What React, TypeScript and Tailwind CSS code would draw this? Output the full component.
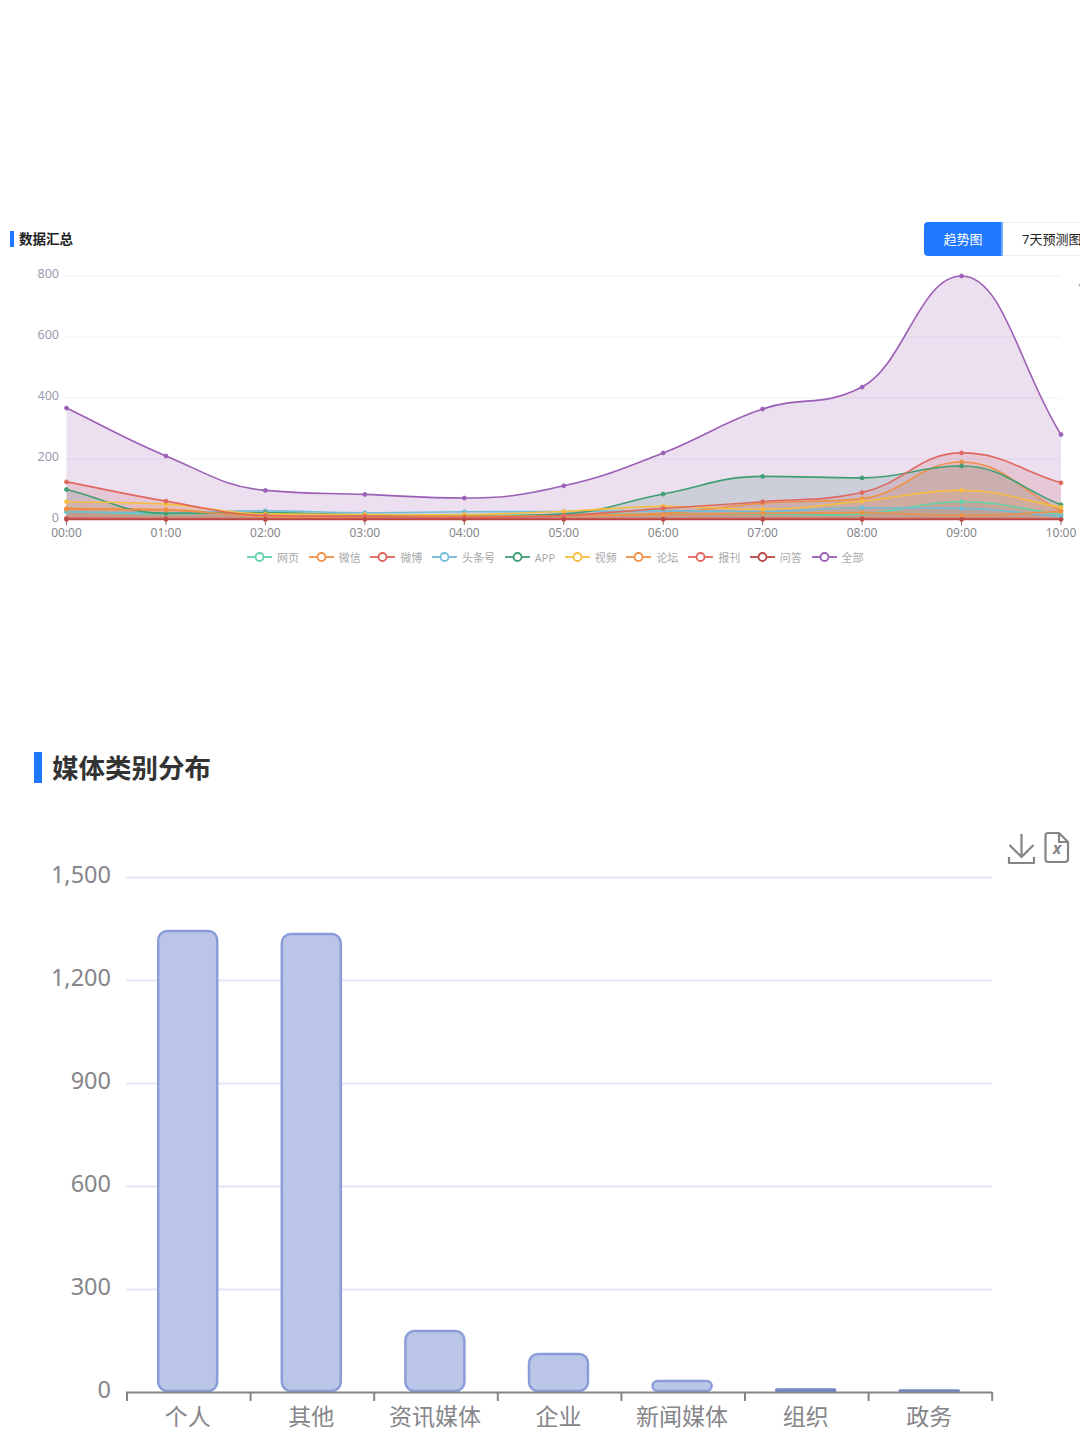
import React from "react";

const FONT = "'Noto Sans', 'Noto Sans CJK SC', sans-serif";

const hours = ["00:00", "01:00", "02:00", "03:00", "04:00", "05:00", "06:00", "07:00", "08:00", "09:00", "10:00"];

// trend chart data, same order as the legend so 全部 ends up on top
const series = [
  { name: "网页", color: "#63d2a8", data: [28, 20, 24, 14, 14, 18, 20, 20, 20, 60, 18] },
  { name: "微信", color: "#ee9048", data: [38, 34, 14, 10, 10, 15, 22, 55, 70, 190, 30] },
  { name: "微博", color: "#dd625a", data: [6, 5, 5, 5, 5, 5, 5, 5, 5, 5, 4] },
  { name: "头条号", color: "#72bcd8", data: [27, 24, 30, 24, 27, 28, 30, 28, 40, 38, 12] },
  { name: "APP", color: "#3f9e72", data: [100, 22, 24, 16, 12, 20, 85, 143, 138, 177, 50] },
  { name: "视频", color: "#f5bd42", data: [60, 52, 20, 18, 18, 28, 45, 35, 62, 97, 42] },
  { name: "论坛", color: "#ee9048", data: [35, 32, 12, 12, 12, 14, 18, 22, 24, 15, 28] },
  { name: "报刊", color: "#e0685e", data: [125, 62, 15, 12, 8, 15, 38, 60, 90, 220, 122] },
  { name: "问答", color: "#b84a46", data: [2, 2, 2, 2, 2, 2, 2, 2, 2, 2, 2] },
  { name: "全部", color: "#9b5fb6", data: [367, 210, 97, 84, 72, 112, 220, 364, 436, 800, 280] },
];

const bars = [
  { name: "个人", top: 931 },
  { name: "其他", top: 934 },
  { name: "资讯媒体", top: 1331 },
  { name: "企业", top: 1354 },
  { name: "新闻媒体", top: 1381 },
  { name: "组织", top: 1389.5 },
  { name: "政务", top: 1390.5 },
];

const px = (i: number) => 66.5 + i * 99.45;
const py = (v: number) => 520 - v * 0.305;

// smooth line through the points, flat at local peaks and clamped so it doesn't overshoot
const smoothPath = (data: number[]) => {
  const pts = data.map((v, i) => [px(i), py(v)]);
  const h = 99.45;
  const slope = pts.map((p, i) => {
    const prev = pts[i - 1] ?? p;
    const next = pts[i + 1] ?? p;
    const d1 = (p[1] - prev[1]) / h;
    const d2 = (next[1] - p[1]) / h;
    if (d1 * d2 < 0) return 0;
    const m = (next[1] - prev[1]) / (next[0] - prev[0]);
    const limit = 2.3 * Math.min(Math.abs(d1 || d2), Math.abs(d2 || d1));
    return Math.sign(m) * Math.min(Math.abs(m), limit);
  });
  let d = `M${pts[0][0]} ${pts[0][1]}`;
  for (let i = 1; i < pts.length; i++) {
    const c = h * 0.42;
    d += ` C${pts[i - 1][0] + c} ${pts[i - 1][1] + slope[i - 1] * c} ${pts[i][0] - c} ${pts[i][1] - slope[i] * c} ${pts[i][0]} ${pts[i][1]}`;
  }
  return d;
};

const SectionTitle = ({ big, text }: { big?: boolean; text: string }) => (
  <div className={big ? "flex items-center gap-[10px] pl-[34px] h-[31px]" : "flex items-center gap-[5px] pl-[10px] h-[34px]"}>
    <span className={big ? "block w-2 h-[31px] bg-[#1f78ff]" : "block w-1 h-4 bg-[#1f78ff]"} />
    <h2 className={big ? "pt-[3px] text-[26.5px] font-bold text-[#333]" : "pt-px text-[13.5px] font-bold text-[#222]"}>{text}</h2>
  </div>
);

const TrendChart = () => (
  <svg width={1080} height={290} viewBox="0 256 1080 290" className="block" fontFamily={FONT}>
    {[800, 600, 400, 200].map((v) => (
      <line key={v} x1={66} x2={1061} y1={py(v)} y2={py(v)} stroke="#f1f1f4" strokeWidth={1} />
    ))}
    {[0, 200, 400, 600, 800].map((v) => (
      <text key={v} x={59} y={py(v) + 1.5} textAnchor="end" fontSize={12.5} fill="#9a9cae">
        {v}
      </text>
    ))}
    {series.map((s) => (
      <path key={s.name} d={`${smoothPath(s.data)} L${px(10)} 520 L${px(0)} 520 Z`} fill={s.color} fillOpacity={0.2} />
    ))}
    {hours.map((h, i) => (
      <g key={h}>
        <line x1={px(i)} x2={px(i)} y1={520} y2={525} stroke="#8a6a6a" strokeWidth={1} />
        <text x={px(i)} y={537} textAnchor="middle" fontSize={12} fill="#85858a">
          {h}
        </text>
      </g>
    ))}
    {series.map((s) => (
      <path key={s.name} d={smoothPath(s.data)} fill="none" stroke={s.color} strokeWidth={1.6} />
    ))}
    {series.map((s) =>
      s.data.map((v, i) => (
        <circle key={s.name + i} cx={px(i)} cy={py(v)} r={2} fill={s.color} stroke={s.color} strokeWidth={0.8} />
      )),
    )}
    <circle cx={1080} cy={285} r={1.6} fill="#b5b5b5" />
  </svg>
);

const TrendLegend = () => (
  <div className="flex items-center pl-[247px] h-6 -mt-px">
    {series.map((l) => (
      <div key={l.name} className="flex items-center gap-[5px] mr-[9.7px]">
        <svg width={25} height={14} viewBox="0 0 25 14">
          <line x1={0} x2={25} y1={7} y2={7} stroke={l.color} strokeWidth={1.8} />
          <circle cx={12.5} cy={7} r={4} fill="#fff" stroke={l.color} strokeWidth={1.8} />
        </svg>
        <span className="text-[11px] leading-none text-[#a8a8a8]">{l.name}</span>
      </div>
    ))}
  </div>
);

const BarChart = () => (
  <svg width={1080} height={657} viewBox="0 783 1080 657" className="block" fontFamily={FONT}>
    {/* download + excel icons */}
    <g fill="none" stroke="#858585" strokeWidth={2.2} strokeLinejoin="round">
      <path d="M1021.5 834V857M1009.5 845L1021.5 857L1033.5 845M1009 857V863H1034V857" />
      <path d="M1048 833H1059L1068 842V859Q1068 862 1065 862H1048Q1045.5 862 1045.5 859V835.5Q1045.5 833 1048 833ZM1059 833V842H1068" />
    </g>
    <text x={1057} y={854} textAnchor="middle" fontSize={16} fontStyle="italic" fontWeight={700} fill="#858585">
      x
    </text>

    {[0, 300, 600, 900, 1200, 1500].map((v, i) => {
      const y = 1392 - i * 103;
      return (
        <g key={v}>
          {v > 0 && <line x1={126} x2={992} y1={y + 0.5} y2={y + 0.5} stroke="#e3e8f5" strokeWidth={2} />}
          <text x={111} y={y + 6} textAnchor="end" fontSize={23.5} fill="#85858a">
            {v.toLocaleString("en-US")}
          </text>
        </g>
      );
    })}

    {bars.map((b, i) => {
      const cx = 187.7 + i * 123.6;
      const h = 1391 - b.top;
      return (
        <g key={b.name}>
          <rect
            x={cx - 29.5}
            y={b.top}
            width={59}
            height={h}
            rx={Math.min(9, h / 2)}
            fill="#bac5e8"
            stroke={h < 3 ? "#7088c8" : "#8a9dd8"}
            strokeWidth={2.5}
          />
          <text x={cx} y={1425} textAnchor="middle" fontSize={23} fill="#85858a">
            {b.name}
          </text>
        </g>
      );
    })}

    <line x1={126} x2={992} y1={1392.5} y2={1392.5} stroke="#858585" strokeWidth={2} />
    {Array.from({ length: 8 }).map((_, i) => {
      const x = 127 + i * 123.6;
      return <line key={i} x1={x} x2={x} y1={1392} y2={1401} stroke="#858585" strokeWidth={2} />;
    })}
  </svg>
);

const App = () => {
  return (
    <div className="w-[1080px] h-[1440px] overflow-hidden bg-white font-['Noto_Sans','Noto_Sans_CJK_SC',sans-serif]">
      <div className="flex justify-between items-center pt-[222px]">
        <SectionTitle text="数据汇总" />
        <div className="flex w-[156px] h-[34px] shrink-0 text-[13px]">
          <button className="w-[79px] pt-px pl-px bg-[#1f78ff] text-white rounded-l-[4px] border-r-2 border-[#74a9f5]">趋势图</button>
          <button className="flex-1 pt-px whitespace-nowrap overflow-hidden text-left pl-[19px] text-[#222] border-y border-[#eeeeee]">
            7天预测图
          </button>
        </div>
      </div>
      <TrendChart />
      <TrendLegend />
      <div className="mt-[183px]">
        <SectionTitle big text="媒体类别分布" />
      </div>
      <BarChart />
    </div>
  );
};

export default App;
